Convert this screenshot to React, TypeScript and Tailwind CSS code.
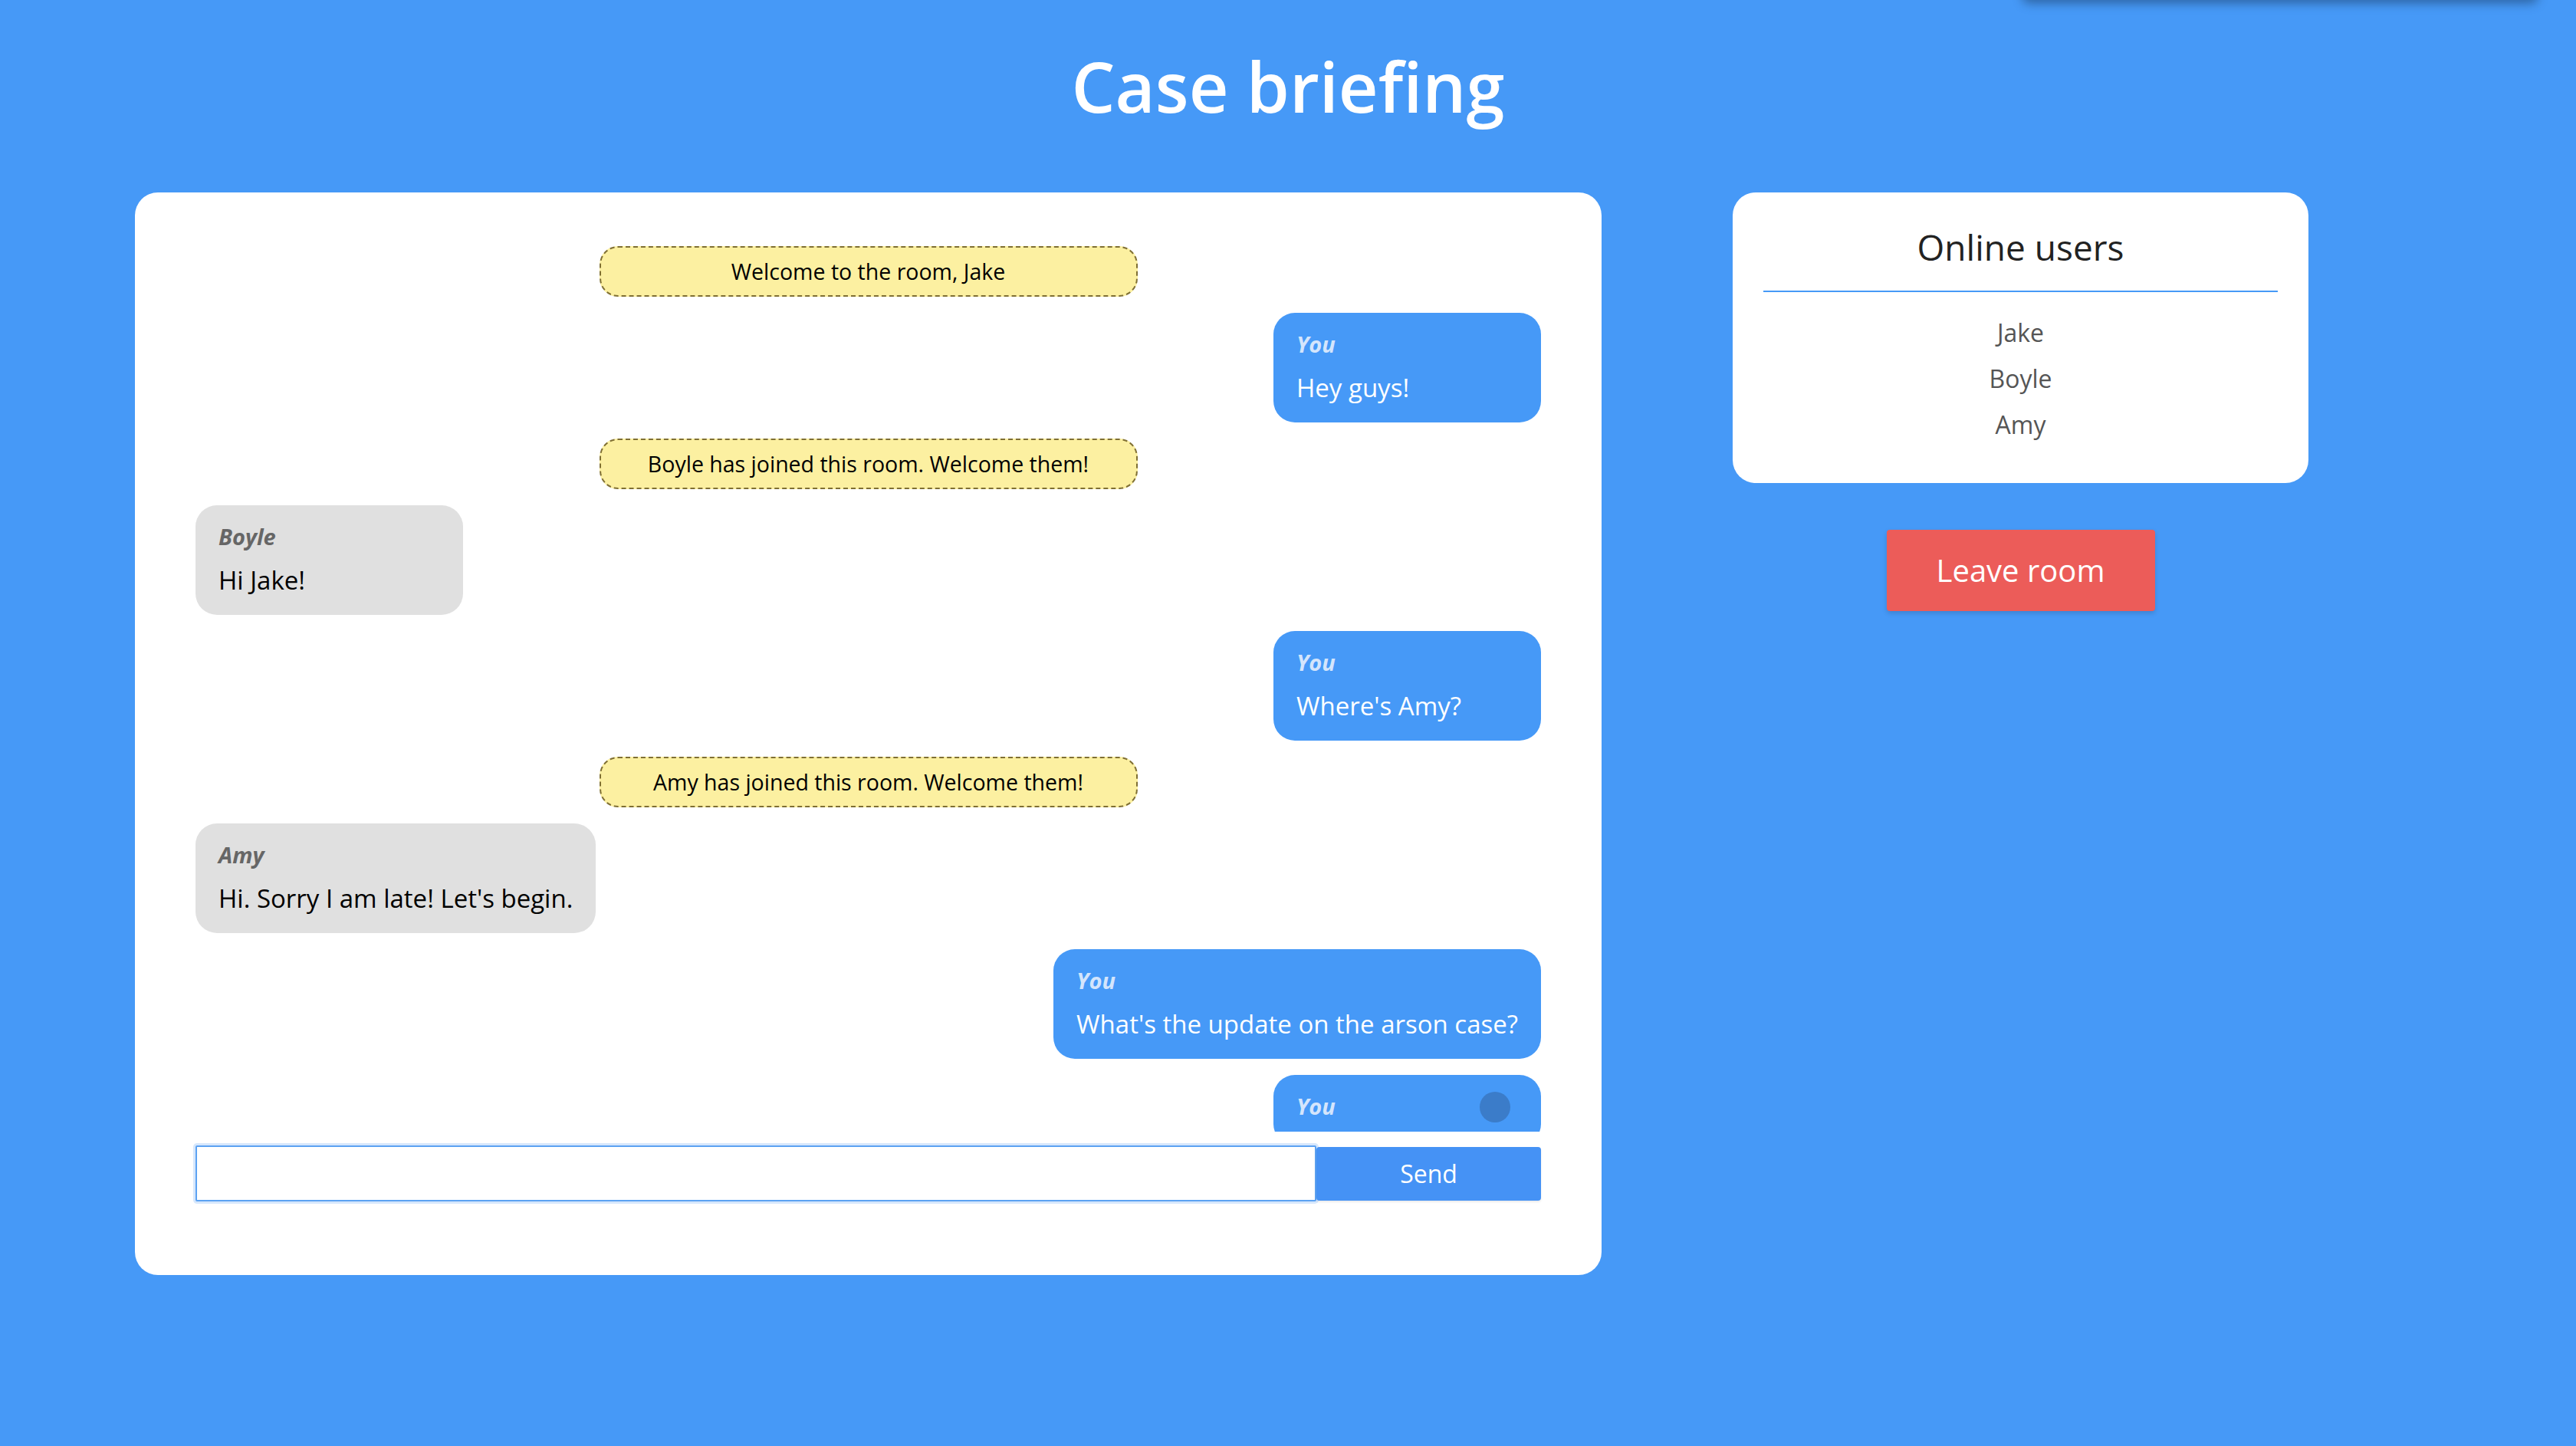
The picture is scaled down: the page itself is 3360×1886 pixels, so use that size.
import { useState } from "react"

type Msg =
  | { kind: "notice"; text: string }
  | { kind: "own" | "other"; author: string; text: string }

const messages: Msg[] = [
  { kind: "notice", text: "Welcome to the room, Jake" },
  { kind: "own", author: "You", text: "Hey guys!" },
  { kind: "notice", text: "Boyle has joined this room. Welcome them!" },
  { kind: "other", author: "Boyle", text: "Hi Jake!" },
  { kind: "own", author: "You", text: "Where's Amy?" },
  { kind: "notice", text: "Amy has joined this room. Welcome them!" },
  { kind: "other", author: "Amy", text: "Hi. Sorry I am late! Let's begin." },
  { kind: "own", author: "You", text: "What's the update on the arson case?" },
]

const users = ["Jake", "Boyle", "Amy"]

function Notice({ text }: { text: string }) {
  return (
    <div className="self-center flex h-[66px] w-[40%] shrink-0 items-center justify-center rounded-[24px] border-2 border-dashed border-[#7f6f33] bg-[#fcf0a1] text-[28.5px] font-medium text-black">
      {text}
    </div>
  )
}

function Bubble({ own, author, text }: { own: boolean; author: string; text: string }) {
  return (
    <div
      className={
        own
          ? "self-end min-w-[349px] shrink-0 rounded-[28px] bg-[#4699f7] px-[30px] pt-[24px] pb-[25px]"
          : "self-start min-w-[349px] shrink-0 rounded-[28px] bg-[#e0e0e0] px-[30px] pt-[24px] pb-[25px]"
      }
    >
      <p className={own ? "text-[29px] leading-[34px] font-bold italic text-[#d4e5fc]" : "text-[29px] leading-[34px] font-bold italic text-[#666666]"}>
        {author}
      </p>
      <p className={own ? "mt-[20px] text-[33px] leading-[40px] text-white" : "mt-[20px] text-[33px] leading-[40px] text-black"}>
        {text}
      </p>
    </div>
  )
}

function ChatBox() {
  const [draft, setDraft] = useState("")

  return (
    <div className="flex h-[1412px] w-[1913px] shrink-0 flex-col rounded-[30px] bg-white px-[79px] pt-[49px]">
      <div className="flex h-[1176px] flex-col gap-[21px] overflow-hidden pt-[21px]">
        {messages.map((m, i) =>
          m.kind === "notice" ? (
            <Notice key={i} text={m.text} />
          ) : (
            <Bubble key={i} own={m.kind === "own"} author={m.author} text={m.text} />
          )
        )}
        {/* someone is typing */}
        <div className="self-end flex min-w-[349px] shrink-0 items-start justify-between rounded-[28px] bg-[#4699f7] px-[30px] pt-[22px] pb-[30px]">
          <p className="mt-[2px] text-[29px] leading-[34px] font-bold italic text-[#d4e5fc]">You</p>
          <span className="mr-[10px] h-[40px] w-[40px] rounded-full bg-[#3b7cc9]" />
        </div>
      </div>

      <form
        className="mt-[18px] flex h-[73px] items-center"
        onSubmit={(e) => {
          e.preventDefault()
          setDraft("")
        }}
      >
        <input
          value={draft}
          onChange={(e) => setDraft(e.target.value)}
          className="h-[73px] flex-1 rounded-[2px] border-2 border-[#5ca2f2] bg-white px-[16px] text-[30px] shadow-[0_0_0_3px_#d6e7fc] outline-none"
        />
        <button
          type="submit"
          className="h-[70px] w-[293px] rounded-[4px] bg-[#4592f5] text-[32px] font-medium text-white shadow-[0_2px_3px_rgba(0,0,0,0.08)]"
        >
          Send
        </button>
      </form>
    </div>
  )
}

function Sidebar() {
  return (
    <div className="flex w-[751px] shrink-0 flex-col items-center">
      <div className="w-full rounded-[30px] bg-white px-[40px] pt-[43px] pb-[46px]">
        <h2 className="border-b-2 border-[#4699f7] pb-[29px] text-center text-[46px] leading-[56px] font-medium text-[#222222]">
          Online users
        </h2>
        <ul className="pt-[23px] text-center">
          {users.map((u) => (
            <li key={u} className="text-[32px] leading-[60px] text-[#555555]">
              {u}
            </li>
          ))}
        </ul>
      </div>
      <button className="mt-[61px] h-[106px] w-[350px] rounded-[4px] bg-[#ec5c59] text-[40px] font-medium text-white shadow-[0_3px_6px_rgba(0,0,0,0.15)]">
        Leave room
      </button>
    </div>
  )
}

export default function App() {
  return (
    <div className="relative min-h-screen overflow-hidden bg-[#4699f7] font-['Open_Sans',sans-serif]">
      {/* toast sitting just above the viewport */}
      <div className="absolute -top-[60px] right-[50px] h-[60px] w-[672px] rounded-b-[8px] bg-[#4699f7] shadow-[0_4px_14px_rgba(0,0,0,0.35)]" />

      <h1 className="pt-[67px] text-center text-[90px] leading-[90px] font-semibold text-white">Case briefing</h1>

      <div className="mt-[94px] flex items-start gap-[171px] pl-[176px]">
        <ChatBox />
        <Sidebar />
      </div>
    </div>
  )
}
